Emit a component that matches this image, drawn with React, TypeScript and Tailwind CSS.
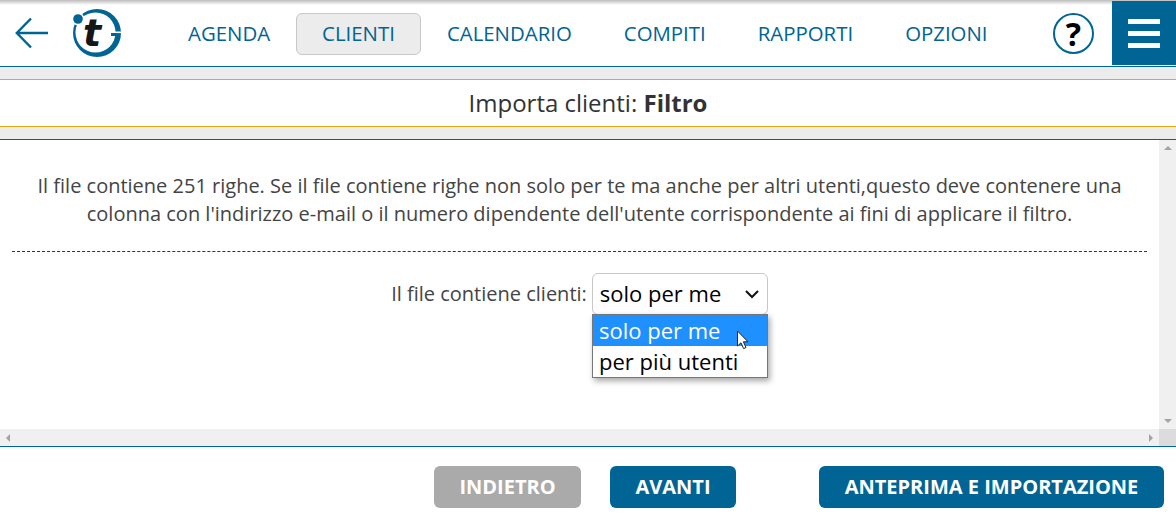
import React from 'react';

const navItems = ['AGENDA', 'CLIENTI', 'CALENDARIO', 'COMPITI', 'RAPPORTI', 'OPZIONI'];

const Logo = () => (
  <svg width="52" height="50" viewBox="0 0 52 50" className="shrink-0">
    <circle cx="27" cy="25" r="24" fill="#006494" />
    <circle cx="25.5" cy="24.5" r="20" fill="#fff" />
    <rect x="41" y="23.5" width="11" height="1.6" fill="#fff" />
    <rect x="41" y="25" width="6" height="3" fill="#006494" />
    <circle cx="8" cy="11" r="6.5" fill="#fff" />
    <circle cx="8" cy="11" r="4.8" fill="#006494" />
    <text x="13" y="38" fontFamily="'DejaVu Sans', sans-serif" fontWeight="700" fontStyle="italic" fontSize="38" fill="#161616">t</text>
  </svg>
);

const App: React.FC = () => {
  return (
    <div className="w-[1176px] h-[524px] flex flex-col bg-white overflow-hidden font-['Open_Sans',sans-serif]">
      <header className="relative h-[66px] shrink-0 flex items-center">
        <div className="absolute top-0 left-0 right-0 h-[5px] bg-gradient-to-b from-[#bdbdbd] to-white" />
        <svg width="34" height="32" viewBox="0 0 34 32" className="ml-[15px] shrink-0">
          <path d="M16 1.5 L1.8 16 L16 30.5 M2 16 H33" fill="none" stroke="#006494" strokeWidth="2.4" />
        </svg>
        <div className="ml-[21px]">
          <Logo />
        </div>
        <nav className="ml-[40px] flex items-center mt-[2px]">
          {navItems.map((item) => (
            <div
              key={item}
              className={
                item === 'CLIENTI'
                  ? 'h-[42px] px-[25px] pb-[2px] flex items-center text-[20.4px] text-[#006494] bg-[#ececec] border border-[#c8c8c8] rounded-[6px]'
                  : 'h-[42px] px-[26px] pb-[2px] flex items-center text-[20.4px] text-[#006494]'
              }
            >
              {item}
            </div>
          ))}
        </nav>
        <div className="absolute right-[82px] top-[13px] w-[41px] h-[41px] rounded-full border-[2.5px] border-[#006494] flex items-center justify-center text-[32px] font-bold text-black leading-none">
          ?
        </div>
        <div className="absolute right-0 top-[1px] w-[64px] h-[64px] bg-[#006494] flex flex-col items-center justify-center gap-[7px]">
          <div className="w-[32px] h-[5px] bg-white" />
          <div className="w-[32px] h-[5px] bg-white" />
          <div className="w-[32px] h-[5px] bg-white" />
        </div>
      </header>

      <div className="h-[14px] shrink-0 bg-[#ececec] border-t border-b border-t-[#006494] border-b-[#e8a90f]" />
      <div className="h-[46px] shrink-0 flex items-center justify-center text-[24px] text-[#333]">
        <span>
          Importa clienti: <b>Filtro</b>
        </span>
      </div>
      <div className="h-[14px] shrink-0 bg-[#ececec] border-t border-b border-t-[#e8a90f] border-b-[#006494]" />

      <main className="relative h-[306px] shrink-0 flex">
        <div className="flex-1 flex flex-col">
          <div className="flex-1 px-[12px]">
            <p className="pt-[32px] pb-[23px] text-center text-[20px] leading-[28px] text-[#444] border-b border-dashed border-[#333]">
              Il file contiene 251 righe. Se il file contiene righe non solo per te ma anche per altri utenti,questo deve contenere una
              <br />
              colonna con l'indirizzo e-mail o il numero dipendente dell'utente corrispondente ai fini di applicare il filtro.
            </p>
            <div className="mt-[21px] flex items-center justify-center">
              <span className="text-[20px] text-[#444] mr-[5px]">Il file contiene clienti:</span>
              <div className="w-[176px] h-[42px] border border-[#c8c8c8] rounded-[6px] flex items-center justify-between pl-[7px] pr-[6px] pb-[1px] text-[22px] text-black">
                <span>solo per me</span>
                <svg width="16" height="10" viewBox="0 0 16 10" className="mr-[1px]">
                  <path d="M2 2 L8 8 L14 2" fill="none" stroke="#111" strokeWidth="2" />
                </svg>
              </div>
            </div>
          </div>
          <div className="h-[17px] shrink-0 bg-[#f0f0f0] flex items-center justify-between px-[6px]">
            <div className="w-0 h-0 border-y-[4px] border-y-transparent border-r-[4px] border-r-[#a3a3a3]" />
            <div className="w-0 h-0 border-y-[4px] border-y-transparent border-l-[4px] border-l-[#a3a3a3]" />
          </div>
        </div>
        <div className="w-[17px] shrink-0 bg-[#f0f0f0] flex flex-col">
          <div className="flex-1 flex flex-col items-center justify-between pt-[6px] pb-[6px]">
            <div className="w-0 h-0 border-x-[4px] border-x-transparent border-b-[4px] border-b-[#a3a3a3]" />
            <div className="w-0 h-0 border-x-[4px] border-x-transparent border-t-[4px] border-t-[#a3a3a3]" />
          </div>
          <div className="h-[17px] shrink-0 bg-[#dcdcdc]" />
        </div>

        <div className="absolute left-[592px] top-[174px] w-[176px] h-[64px] bg-white border border-[#767676] shadow-[2px_3px_6px_rgba(0,0,0,0.35)] text-[22px] leading-[31px]">
          <div className="bg-[#1e90ff] text-white pl-[6px]">solo per me</div>
          <div className="text-black pl-[6px]">per più utenti</div>
          <svg width="14" height="21" viewBox="0 0 14 21" className="absolute left-[143px] top-[15px]">
            <path d="M1.5 1 V16 L5 12.8 L7.6 18.6 L10 17.5 L7.4 11.8 H12 Z" fill="#fff" stroke="#222" strokeWidth="1" />
          </svg>
        </div>
      </main>

      <footer className="flex-1 border-t border-[#006494] flex items-start justify-end pt-[19px] pr-[12px] text-[20px] font-bold text-white">
        <div className="w-[147px] h-[42px] rounded-[6px] bg-[#aaaaaa] flex items-center justify-center">INDIETRO</div>
        <div className="ml-[29px] w-[126px] h-[42px] rounded-[6px] bg-[#006494] flex items-center justify-center">AVANTI</div>
        <div className="ml-[83px] w-[345px] h-[42px] rounded-[6px] bg-[#006494] flex items-center justify-center">ANTEPRIMA E IMPORTAZIONE</div>
      </footer>
    </div>
  );
};

export default App;
